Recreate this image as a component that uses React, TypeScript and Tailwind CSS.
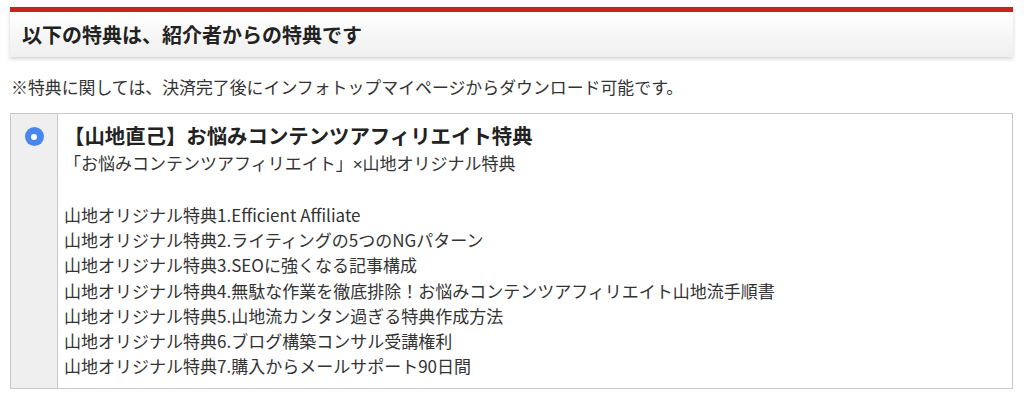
import React from 'react';

const items = [
  '山地オリジナル特典1.Efficient Affiliate',
  '山地オリジナル特典2.ライティングの5つのNGパターン',
  '山地オリジナル特典3.SEOに強くなる記事構成',
  '山地オリジナル特典4.無駄な作業を徹底排除！お悩みコンテンツアフィリエイト山地流手順書',
  '山地オリジナル特典5.山地流カンタン過ぎる特典作成方法',
  '山地オリジナル特典6.ブログ構築コンサル受講権利',
  '山地オリジナル特典7.購入からメールサポート90日間',
];

export default function App() {
  return (
    <div className="bg-white w-[1024px] h-[395px] pl-[10px] pr-[11px] pt-[7px] text-[#222] font-['Noto_Sans_CJK_JP','Noto_Sans',sans-serif]">
      {/* Header */}
      <div className="border-t-[5px] border-[#c3261f] bg-gradient-to-b from-white to-[#efefef] shadow-[0_2px_4px_rgba(0,0,0,0.18)] h-[50px] flex items-center px-[12px]">
        <h2 className="text-[20px] font-bold leading-none">以下の特典は、紹介者からの特典です</h2>
      </div>

      <p className="mt-[18px] pl-[1px] text-[16.9px] leading-[24px] text-[#333]">
        ※特典に関しては、決済完了後にインフォトップマイページからダウンロード可能です。
      </p>

      {/* Bonus box */}
      <div className="mt-[14px] flex border border-[#c8c8c8] h-[276px]">
        <div className="w-[47px] shrink-0 bg-[#efefef] border-r border-[#c8c8c8] flex justify-center pt-[13px]">
          <span className="w-[19px] h-[19px] rounded-full bg-[#4a86ef] flex items-center justify-center">
            <span className="w-[6px] h-[6px] rounded-full bg-white" />
          </span>
        </div>
        <div className="pl-[6px] pt-[7px] text-[#333]">
          <div className="text-[20.4px] font-bold leading-[28px] text-[#222]">【山地直己】お悩みコンテンツアフィリエイト特典</div>
          <div className="text-[17px] leading-[26px] mt-[1px]">
            「お悩みコンテンツアフィリエイト」<span className="font-['Liberation_Sans',sans-serif]">×</span>山地オリジナル特典
          </div>
          <div className="text-[17px] leading-[25.2px] mt-[24px]">
            {items.map((t) => (
              <div key={t}>{t}</div>
            ))}
          </div>
        </div>
      </div>
    </div>
  );
}
